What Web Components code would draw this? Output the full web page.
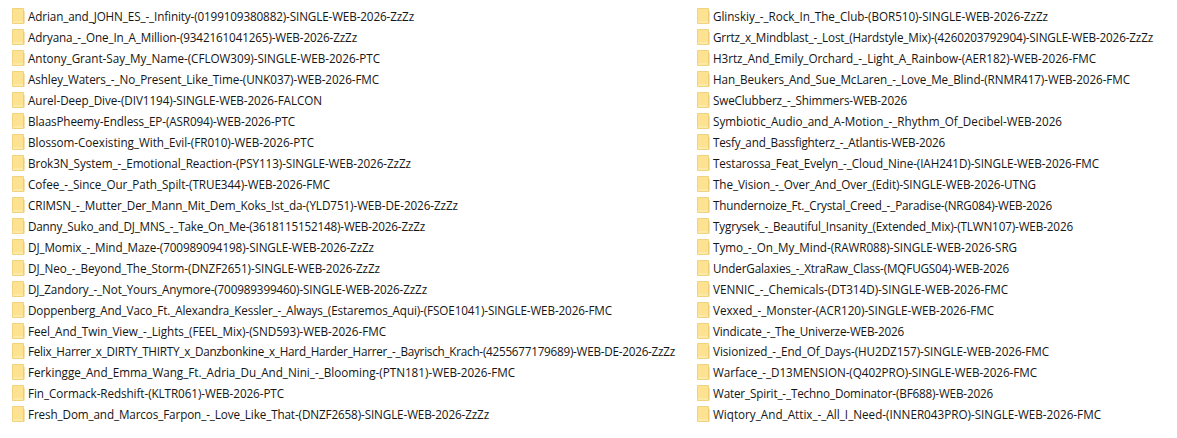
<!DOCTYPE html>
<html>
<head>
<meta charset="utf-8">
<style>
    html, body { margin: 0; background: #fff; }
    body { width: 1177px; height: 438px; overflow: hidden; }
</style>
</head>
<body>
<folder-listing></folder-listing>
<script>
const FONT = '11.7px "Open Sans"';
// name, and the x where the name ends in the window
const LEFT = [
    ['Adrian_and_JOHN_ES_-_Infinity-(0199109380882)-SINGLE-WEB-2026-ZzZz', 414],
    ['Adryana_-_One_In_A_Million-(9342161041265)-WEB-2026-ZzZz', 357],
    ['Antony_Grant-Say_My_Name-(CFLOW309)-SINGLE-WEB-2026-PTC', 380],
    ['Ashley_Waters_-_No_Present_Like_Time-(UNK037)-WEB-2026-FMC', 379],
    ['Aurel-Deep_Dive-(DIV1194)-SINGLE-WEB-2026-FALCON', 322],
    ['BlaasPheemy-Endless_EP-(ASR094)-WEB-2026-PTC', 295],
    ['Blossom-Coexisting_With_Evil-(FR010)-WEB-2026-PTC', 314],
    ['Brok3N_System_-_Emotional_Reaction-(PSY113)-SINGLE-WEB-2026-ZzZz', 411],
    ['Cofee_-_Since_Our_Path_Spilt-(TRUE344)-WEB-2026-FMC', 330],
    ['CRIMSN_-_Mutter_Der_Mann_Mit_Dem_Koks_Ist_da-(YLD751)-WEB-DE-2026-ZzZz', 458],
    ['Danny_Suko_and_DJ_MNS_-_Take_On_Me-(3618115152148)-WEB-2026-ZzZz', 425],
    ['DJ_Momix_-_Mind_Maze-(700989094198)-SINGLE-WEB-2026-ZzZz', 374],
    ['DJ_Neo_-_Beyond_The_Storm-(DNZF2651)-SINGLE-WEB-2026-ZzZz', 380],
    ['DJ_Zandory_-_Not_Yours_Anymore-(700989399460)-SINGLE-WEB-2026-ZzZz', 427],
    ['Doppenberg_And_Vaco_Ft._Alexandra_Kessler_-_Always_(Estaremos_Aqui)-(FSOE1041)-SINGLE-WEB-2026-FMC', 612],
    ['Feel_And_Twin_View_-_Lights_(FEEL_Mix)-(SND593)-WEB-2026-FMC', 386],
    ['Felix_Harrer_x_DIRTY_THIRTY_x_Danzbonkine_x_Hard_Harder_Harrer_-_Bayrisch_Krach-(4255677179689)-WEB-DE-2026-ZzZz', 675],
    ['Ferkingge_And_Emma_Wang_Ft._Adria_Du_And_Nini_-_Blooming-(PTN181)-WEB-2026-FMC', 515],
    ['Fin_Cormack-Redshift-(KLTR061)-WEB-2026-PTC', 284],
    ['Fresh_Dom_and_Marcos_Farpon_-_Love_Like_That-(DNZF2658)-SINGLE-WEB-2026-ZzZz', 489]
];
const RIGHT = [
    ['Glinskiy_-_Rock_In_The_Club-(BOR510)-SINGLE-WEB-2026-ZzZz', 1048],
    ['Grrtz_x_Mindblast_-_Lost_(Hardstyle_Mix)-(4260203792904)-SINGLE-WEB-2026-ZzZz', 1153],
    ['H3rtz_And_Emily_Orchard_-_Light_A_Rainbow-(AER182)-WEB-2026-FMC', 1096],
    ['Han_Beukers_And_Sue_McLaren_-_Love_Me_Blind-(RNMR417)-WEB-2026-FMC', 1130],
    ['SweClubberz_-_Shimmers-WEB-2026', 907],
    ['Symbiotic_Audio_and_A-Motion_-_Rhythm_Of_Decibel-WEB-2026', 1062],
    ['Tesfy_and_Bassfighterz_-_Atlantis-WEB-2026', 945],
    ['Testarossa_Feat_Evelyn_-_Cloud_Nine-(IAH241D)-SINGLE-WEB-2026-FMC', 1099],
    ['The_Vision_-_Over_And_Over_(Edit)-SINGLE-WEB-2026-UTNG', 1036],
    ['Thundernoize_Ft._Crystal_Creed_-_Paradise-(NRG084)-WEB-2026', 1052],
    ['Tygrysek_-_Beautiful_Insanity_(Extended_Mix)-(TLWN107)-WEB-2026', 1073],
    ['Tymo_-_On_My_Mind-(RAWR088)-SINGLE-WEB-2026-SRG', 1017],
    ['UnderGalaxies_-_XtraRaw_Class-(MQFUGS04)-WEB-2026', 1009],
    ['VENNIC_-_Chemicals-(DT314D)-SINGLE-WEB-2026-FMC', 1008],
    ['Vexxed_-_Monster-(ACR120)-SINGLE-WEB-2026-FMC', 994],
    ['Vindicate_-_The_Univerze-WEB-2026', 904],
    ['Visionized_-_End_Of_Days-(HU2DZ157)-SINGLE-WEB-2026-FMC', 1049],
    ['Warface_-_D13MENSION-(Q402PRO)-SINGLE-WEB-2026-FMC', 1037],
    ['Water_Spirit_-_Techno_Dominator-(BF688)-WEB-2026', 993],
    ['Wiqtory_And_Attix_-_All_I_Need-(INNER043PRO)-SINGLE-WEB-2026-FMC', 1101]
];

const ruler = document.createElement('canvas').getContext('2d');
ruler.font = FONT;

class FolderRow extends HTMLElement {
    constructor() {
        super();
        this.attachShadow({ mode: 'open' });
        this.shadowRoot.innerHTML = `
            <style>
                :host {
                    display: flex;
                    align-items: center;
                    gap: 3px;
                    height: 20.95px;
                    white-space: nowrap;
                }
                svg { flex: none; display: block; }
                .name { transform: translateY(-0.5px); }
            </style>
            <svg width="13" height="16" viewBox="0 0 13 16">
                <path d="M0.5 0.5 H11.5 V15.5 H0.5 Z" fill="#fce291" stroke="#f0d27f"/>
                <path d="M1 13 H11 V15 H1 Z" fill="#fdeaa6"/>
                <path d="M11.5 3 H12.5 V15.5 H11.5 Z" fill="#e9c76e"/>
            </svg>
            <span class="name"><slot></slot></span>
        `;
    }
}
customElements.define('folder-row', FolderRow);

class FolderColumn extends HTMLElement {
    constructor() {
        super();
        this.attachShadow({ mode: 'open' });
        this.shadowRoot.innerHTML = `
            <style>
                :host { display: flex; flex-direction: column; }
            </style>
            <slot></slot>
        `;
    }
    // textLeft: x where the names start
    fill(names, textLeft) {
        names.forEach(([name, end]) => {
            const row = document.createElement('folder-row');
            row.textContent = name;
            const spacing = (end - textLeft - ruler.measureText(name).width) / name.length;
            row.style.letterSpacing = spacing.toFixed(3) + 'px';
            this.appendChild(row);
        });
    }
}
customElements.define('folder-column', FolderColumn);

class FolderListing extends HTMLElement {
    constructor() {
        super();
        this.attachShadow({ mode: 'open' });
        this.shadowRoot.innerHTML = `
            <style>
                :host {
                    display: grid;
                    grid-template-columns: 685px 1fr;
                    padding: 6px 0 0 12px;
                    font: 11.7px "Open Sans", sans-serif;
                    color: #151515;
                }
            </style>
            <folder-column id="a"></folder-column>
            <folder-column id="b"></folder-column>
        `;
    }
    connectedCallback() {
        this.shadowRoot.getElementById('a').fill(LEFT, 28);
        this.shadowRoot.getElementById('b').fill(RIGHT, 713);
    }
}
customElements.define('folder-listing', FolderListing);
</script>
</body>
</html>
